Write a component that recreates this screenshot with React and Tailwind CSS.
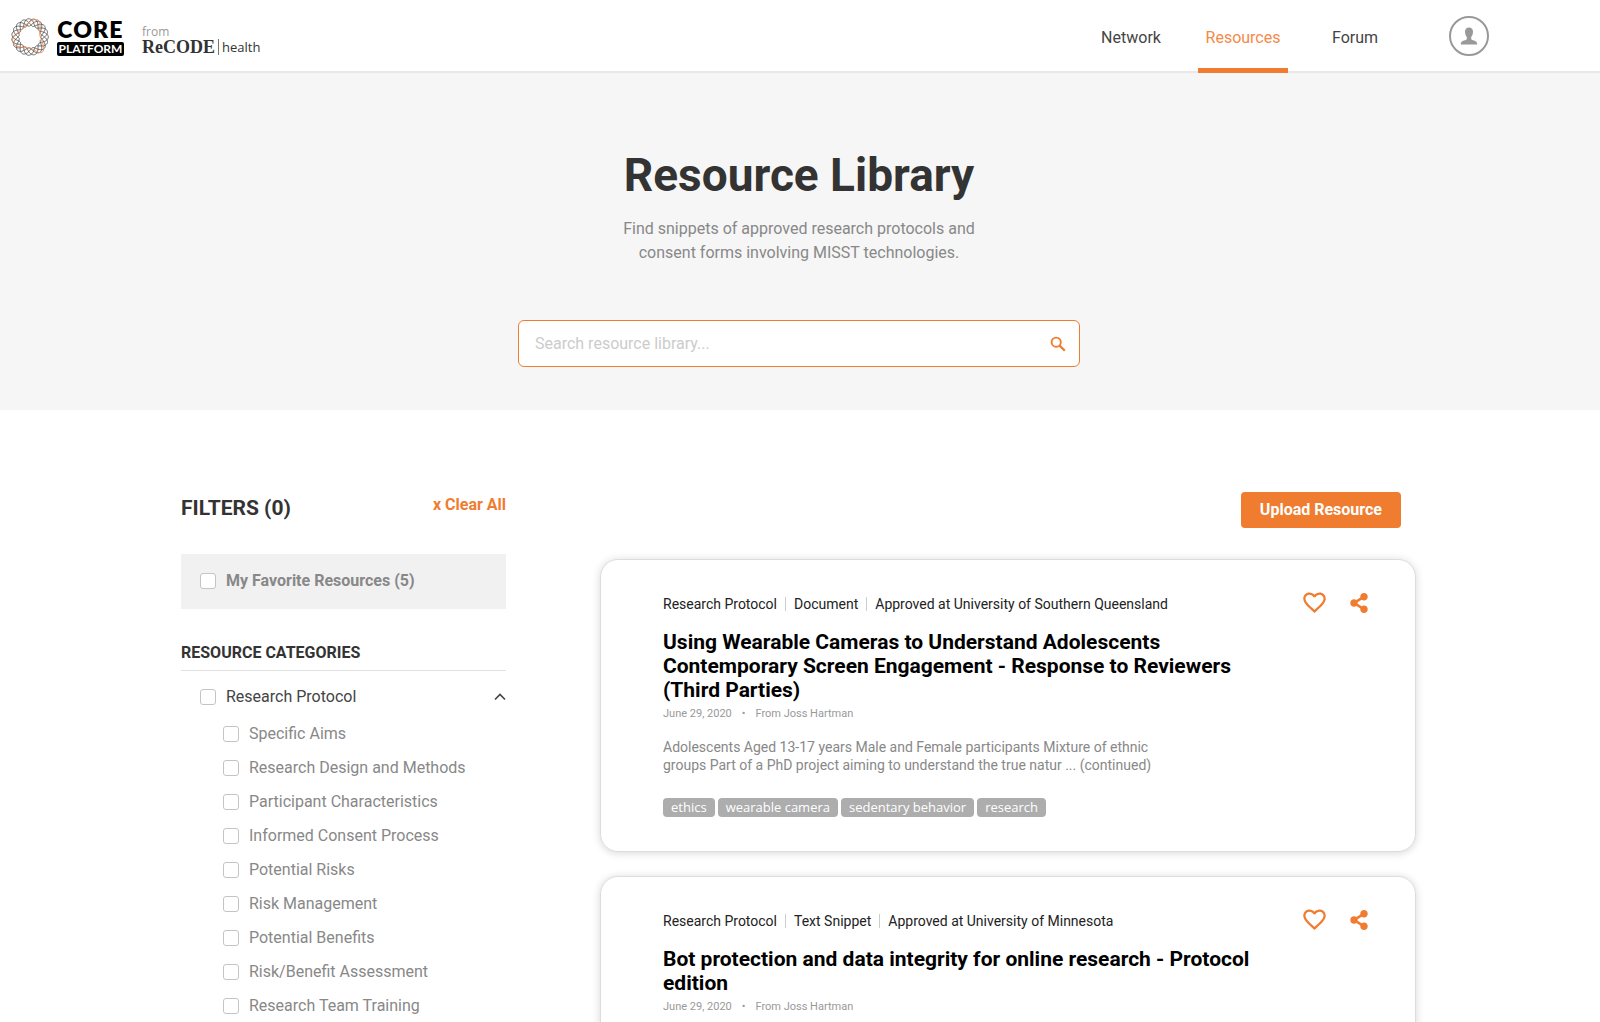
import { FaShareAlt } from 'react-icons/fa'
import { MdFavoriteBorder } from 'react-icons/md'

const SUBCATEGORIES = [
  'Specific Aims',
  'Research Design and Methods',
  'Participant Characteristics',
  'Informed Consent Process',
  'Potential Risks',
  'Risk Management',
  'Potential Benefits',
  'Risk/Benefit Assessment',
  'Research Team Training',
]

const RESOURCES = [
  {
    meta: ['Research Protocol', 'Document', 'Approved at University of Southern Queensland'],
    title: 'Using Wearable Cameras to Understand Adolescents Contemporary Screen Engagement - Response to Reviewers (Third Parties)',
    date: 'June 29, 2020',
    author: 'From Joss Hartman',
    summary:
      'Adolescents Aged 13-17 years Male and Female participants Mixture of ethnic groups Part of a PhD project aiming to understand the true natur ... (continued)',
    tags: ['ethics', 'wearable camera', 'sedentary behavior', 'research'],
  },
  {
    meta: ['Research Protocol', 'Text Snippet', 'Approved at University of Minnesota'],
    title: 'Bot protection and data integrity for online research - Protocol edition',
    date: 'June 29, 2020',
    author: 'From Joss Hartman',
    tags: [],
  },
]

// Closed rosette: the radius swings between the inner and outer rim `petals` times over `turns` turns.
function rosette(petals, turns, mid, swing) {
  const steps = 960
  return Array.from({ length: steps }, (_, i) => {
    const a = (i / steps) * turns * 2 * Math.PI
    const r = mid + swing * Math.cos((petals / turns) * a)
    return `${(20 + r * Math.cos(a)).toFixed(2)},${(20 + r * Math.sin(a)).toFixed(2)}`
  }).join(' ')
}

function RingLogo() {
  return (
    <svg viewBox="0 0 40 40" className="size-10" aria-hidden="true" fill="none">
      <polygon points={rosette(19, 4, 14.6, 3.7)} stroke="#444" strokeWidth="0.8" />
      <path
        d="M20 31C13 31 4 30 2.500 25C1.500 20 9 15 14 10C18 5 24 1 28 3C32 6 29 13 30 19C32 25 36 32 32 35.500C28 37 23 31 20 31Z"
        stroke="#f28a4d"
        strokeWidth="0.9"
      />
    </svg>
  )
}

function Logo() {
  return (
    <a href="#home" className="flex items-center pt-[3px] pl-[10px]" aria-label="CORE Platform home">
      <RingLogo />
      <span className="ml-[7px] flex w-[67px] flex-col items-center gap-[3px] font-['Lato']">
        <span className="text-[23px] leading-[20px] font-extrabold tracking-wider text-black">CORE</span>
        <span className="w-full rounded-[2px] bg-black text-center text-[12px] leading-[14px] font-bold text-white">PLATFORM</span>
      </span>
      <span className="ml-[18px] flex flex-col pt-[6px]">
        <span className="font-['Open_Sans'] text-[12px] leading-[14px] text-[#999]">from</span>
        <span className="flex items-center text-[#333]">
          <span className="font-['Liberation_Serif'] text-[18px] leading-[16px] font-bold">ReCODE</span>
          <span className="mx-[3px] h-4 w-px bg-[#777]" />
          <span className="font-['Open_Sans'] text-[13px] leading-[16px] font-medium">health</span>
        </span>
      </span>
    </a>
  )
}

function NavLink({ label, active }) {
  return (
    <a
      href={'#' + label.toLowerCase()}
      className={
        '-mb-0.5 flex w-[90px] items-center justify-center border-b-[5px] pt-[7px] ' +
        (active ? 'border-[#f07c30] text-[#f58a48]' : 'border-transparent text-[#444]')
      }
    >
      {label}
    </a>
  )
}

function Header() {
  return (
    <header className="flex h-[73px] justify-between border-b-2 border-[#e8e8e8] bg-white pr-[111px]">
      <Logo />
      <div className="flex">
        <nav className="flex gap-[22px]">
          <NavLink label="Network" />
          <NavLink label="Resources" active />
          <NavLink label="Forum" />
        </nav>
        <button type="button" aria-label="Account" className="ml-[49px] flex size-10 items-center justify-center self-center rounded-full border-2 border-[#999] text-[#999]">
          <svg viewBox="0 0 18 18" className="size-[18px]" fill="currentColor" aria-hidden="true">
            <path d="M9 0.500C11.600 0.500 13 2.200 13 4.800C13 7 12.300 9 11.200 10V12C11.200 12.500 12 12.800 13 13.200C15.500 14 17.200 14.500 17.200 17.500H0.800C0.800 14.500 2.500 14 5 13.200C6 12.800 6.800 12.500 6.800 12V10C5.700 9 5 7 5 4.800C5 2.200 6.400 0.500 9 0.500Z" />
          </svg>
        </button>
      </div>
    </header>
  )
}

function Hero() {
  return (
    <section className="flex flex-col items-center bg-[#f6f6f6] pt-[74px] pr-0.5 pb-[43px]">
      <h1 className="text-[46px] leading-[56px] font-bold text-[#333]">Resource Library</h1>
      <p className="mt-[14px] max-w-[380px] text-center text-[16px] leading-[24px] text-[#888]">
        Find snippets of approved research protocols and consent forms involving MISST technologies.
      </p>
      <form role="search" className="mt-[55px] flex h-[47px] w-full max-w-[562px] items-center rounded-md border border-[#f07c30] bg-white pr-[13px] pl-4">
        <input
          type="search"
          aria-label="Search resource library"
          placeholder="Search resource library..."
          className="min-w-0 flex-1 text-[16px] leading-[24px] text-[#444] outline-none placeholder:text-[#ccc]"
        />
        <button type="submit" aria-label="Search" className="text-[#f07c30]">
          <svg viewBox="0 0 16 16" className="size-4" fill="none" stroke="currentColor" aria-hidden="true">
            <circle cx="6.200" cy="6.200" r="4.600" strokeWidth="1.900" />
            <path d="M9.600 9.600L14.800 14.800" strokeWidth="2.300" />
          </svg>
        </button>
      </form>
    </section>
  )
}

function Check({ label, className }) {
  return (
    <label className={'flex items-center gap-[10px] text-[16px] leading-[24px] ' + className}>
      <input type="checkbox" className="size-4 shrink-0 appearance-none rounded-[3px] border border-[#c4c4c4] bg-white checked:bg-[#f07c30]" />
      {label}
    </label>
  )
}

function Filters() {
  return (
    <aside className="w-[325px] shrink-0">
      <div className="flex items-start justify-between">
        <h2 className="text-[21px] leading-[32px] font-bold text-[#333]">FILTERS (0)</h2>
        <button type="button" className="text-[16px] leading-[26px] font-bold text-[#f07c30]">
          x Clear All
        </button>
      </div>
      <Check label="My Favorite Resources (5)" className="mt-[30px] h-[55px] bg-[#f1f1f1] px-[19px] pb-0.5 font-bold text-[#888]" />
      <h3 className="mt-[32px] border-b border-[#e2e2e2] pb-[5px] text-[16px] leading-[24px] font-bold text-[#333]">RESOURCE CATEGORIES</h3>
      <div className="mt-[14px] flex items-center justify-between pl-[19px]">
        <Check label="Research Protocol" className="text-[#444]" />
        <button type="button" aria-label="Collapse Research Protocol" className="text-[#444]">
          <svg viewBox="0 0 12 8" className="h-2 w-3" fill="none" stroke="currentColor" strokeWidth="1.600" aria-hidden="true">
            <path d="M1 6.500L6 1.500L11 6.500" />
          </svg>
        </button>
      </div>
      <ul className="mt-[13px] flex flex-col gap-[10px] pl-[42px]">
        {SUBCATEGORIES.map((name) => (
          <li key={name}>
            <Check label={name} className="text-[#888]" />
          </li>
        ))}
      </ul>
    </aside>
  )
}

function ResourceCard({ resource }) {
  return (
    <article className="flex items-start justify-between rounded-[18px] border border-[#ddd] bg-white pt-[34px] pr-[46px] pb-[34px] pl-[62px] shadow-[0_1px_8px_rgba(0,0,0,0.16)]">
      <div className="max-w-[610px]">
        <p className="flex items-center text-[14px] leading-[20px] text-[#222]">
          {resource.meta.map((item, i) => (
            <span key={item} className="flex items-center">
              {i > 0 && <span className="mx-[8px] h-[14px] w-px bg-[#ccc]" />}
              {item}
            </span>
          ))}
        </p>
        <h4 className="mt-4 text-[21px] leading-[24px] font-bold text-black">{resource.title}</h4>
        <p className="mt-1 flex gap-[10px] text-[11px] leading-[16px] text-[#999]">
          <span>{resource.date}</span>
          <span>•</span>
          <span>{resource.author}</span>
        </p>
        {resource.summary && <p className="mt-[16px] max-w-[510px] text-[14px] leading-[18px] text-[#888]">{resource.summary}</p>}
        {resource.tags.length > 0 && (
          <ul className="mt-[24px] flex gap-[3px]">
            {resource.tags.map((tag) => (
              <li key={tag} className="rounded-[4px] bg-[#adadad] px-2 font-['Open_Sans'] text-[13px] leading-[19px] text-white">
                {tag}
              </li>
            ))}
          </ul>
        )}
      </div>
      <div className="-mt-[5px] flex items-center gap-[21px] text-[#f07c30]">
        <button type="button" aria-label="Add to favorites">
          <MdFavoriteBorder size={27} />
        </button>
        <button type="button" aria-label="Share">
          <FaShareAlt size={20} />
        </button>
      </div>
    </article>
  )
}

export default function App() {
  return (
    <div className="min-h-screen bg-white font-['Roboto',sans-serif] text-[16px]">
      <Header />
      <Hero />
      <main className="flex gap-[94px] pt-[82px] pr-[184px] pb-16 pl-[181px]">
        <Filters />
        <section className="flex min-w-0 flex-1 flex-col">
          <button type="button" className="mr-[15px] h-9 self-end rounded-[4px] bg-[#f07c30] px-[19px] text-[16px] font-bold text-white">
            Upload Resource
          </button>
          <div className="mt-[31px] flex flex-col gap-[24px]">
            {RESOURCES.map((resource) => (
              <ResourceCard key={resource.title} resource={resource} />
            ))}
          </div>
        </section>
      </main>
    </div>
  )
}
